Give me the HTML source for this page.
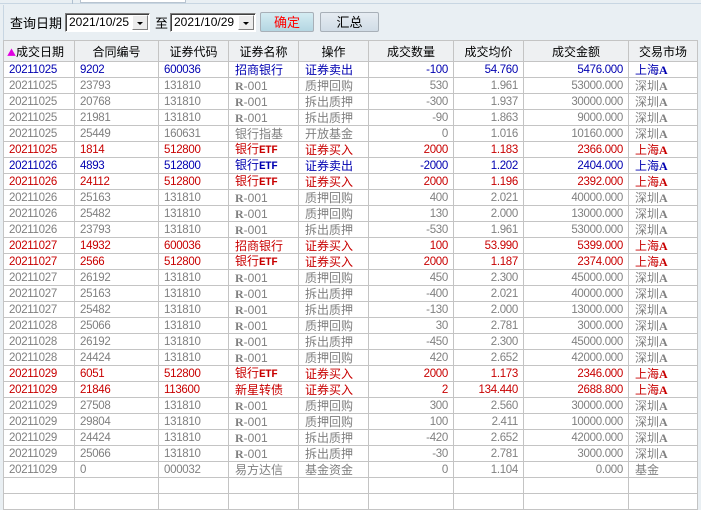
<!DOCTYPE html>
<html><head><meta charset="utf-8"><style>
*{margin:0;padding:0;box-sizing:border-box}
body{width:701px;height:496px;overflow:hidden;background:#e9eff3;position:relative;font-family:"Liberation Sans","Noto Sans CJK SC",sans-serif}
.abs{position:absolute}
.date{position:absolute;top:13px;height:19px;background:#fff;border:1px solid #808080;border-right-color:#fff;border-bottom-color:#fff;box-shadow:inset 1px 1px 0 #404040;font:12px "Liberation Sans",sans-serif;line-height:17px;padding-left:3px;color:#000}
.dd{position:absolute;right:1px;top:1px;width:16px;height:15px;background:#ececec;border:1px solid #fff;border-right-color:#808080;border-bottom-color:#808080}
.dd:after{content:"";position:absolute;left:4px;top:6px;border-left:3px solid transparent;border-right:3px solid transparent;border-top:3px solid #000}
.btn{position:absolute;top:12px;height:20px;border:1px solid #a8b0b8;border-radius:2px;font:13px "Noto Sans CJK SC",sans-serif;line-height:18px;text-align:center}
table{position:absolute;left:3px;top:40px;border-collapse:collapse;table-layout:fixed;background:#fff}
td,th{border:1px solid #c4c4c4;height:16px;padding:0 5px;white-space:nowrap;overflow:hidden;font:11.5px "Liberation Sans",sans-serif;line-height:14px;letter-spacing:-0.3px}
th{height:21px;background:#eef0f2;font:12px "Noto Sans CJK SC",sans-serif;font-weight:normal;color:#000;text-align:center;letter-spacing:0}
td.c{font:12px "Liberation Sans","Noto Sans CJK SC",sans-serif;line-height:14px;padding-left:6px;letter-spacing:0}
td.r{text-align:right}
tr.g td{color:#808080}
tr.b td{color:#0000b0}
tr.d td{color:#c80000}
b{font-family:"Liberation Serif",serif;font-weight:bold}
i{font-style:normal;font:bold 11px "Liberation Mono",monospace;letter-spacing:-0.5px}
</style></head><body>
<div class="abs" style="left:0;top:0;width:701px;height:4px;background:#e9eff3;border-bottom:1px solid #c8d6e2"></div>
<div class="abs" style="left:72px;top:0;width:1px;height:4px;background:#b0c0d0"></div>
<div class="abs" style="left:80px;top:0;width:106px;height:3px;background:#fff;border:1px solid #b8c4d0;border-top:none"></div>
<div class="abs" style="left:3px;top:5px;width:1px;height:36px;background:#c8d6e2"></div>
<div class="abs" style="left:10px;top:14px;font:13px 'Noto Sans CJK SC',sans-serif;line-height:18px">查询日期</div>
<div class="date" style="left:65px;width:85px">2021/10/25<div class="dd"></div></div>
<div class="abs" style="left:155px;top:14px;font:13px 'Noto Sans CJK SC',sans-serif;line-height:18px">至</div>
<div class="date" style="left:170px;width:86px">2021/10/29<div class="dd"></div></div>
<div class="btn" style="left:260px;width:54px;color:#f00;background:linear-gradient(#d4ecf2,#b4d6e2)">确定</div>
<div class="btn" style="left:320px;width:59px;color:#000;background:linear-gradient(#e6ecf2,#d0dce6)">汇总</div>
<table>
<colgroup><col style="width:71px"><col style="width:84px"><col style="width:70px"><col style="width:70px"><col style="width:70px"><col style="width:85px"><col style="width:70px"><col style="width:105px"><col style="width:69px"></colgroup>
<tr><th style="text-align:left;padding-left:3px"><span style="color:#e000e0;font-size:9px">▲</span>成交日期</th><th>合同编号</th><th>证券代码</th><th>证券名称</th><th>操作</th><th>成交数量</th><th>成交均价</th><th>成交金额</th><th>交易市场</th></tr>
<tr class="b"><td>20211025</td><td>9202</td><td>600036</td><td class="c">招商银行</td><td class="c">证券卖出</td><td class="r">-100</td><td class="r">54.760</td><td class="r">5476.000</td><td class="c">上海<b>A</b></td></tr>
<tr class="g"><td>20211025</td><td>23793</td><td>131810</td><td class="c"><b>R</b>-001</td><td class="c">质押回购</td><td class="r">530</td><td class="r">1.961</td><td class="r">53000.000</td><td class="c">深圳<b>A</b></td></tr>
<tr class="g"><td>20211025</td><td>20768</td><td>131810</td><td class="c"><b>R</b>-001</td><td class="c">拆出质押</td><td class="r">-300</td><td class="r">1.937</td><td class="r">30000.000</td><td class="c">深圳<b>A</b></td></tr>
<tr class="g"><td>20211025</td><td>21981</td><td>131810</td><td class="c"><b>R</b>-001</td><td class="c">拆出质押</td><td class="r">-90</td><td class="r">1.863</td><td class="r">9000.000</td><td class="c">深圳<b>A</b></td></tr>
<tr class="g"><td>20211025</td><td>25449</td><td>160631</td><td class="c">银行指基</td><td class="c">开放基金</td><td class="r">0</td><td class="r">1.016</td><td class="r">10160.000</td><td class="c">深圳<b>A</b></td></tr>
<tr class="d"><td>20211025</td><td>1814</td><td>512800</td><td class="c">银行<i>ETF</i></td><td class="c">证券买入</td><td class="r">2000</td><td class="r">1.183</td><td class="r">2366.000</td><td class="c">上海<b>A</b></td></tr>
<tr class="b"><td>20211026</td><td>4893</td><td>512800</td><td class="c">银行<i>ETF</i></td><td class="c">证券卖出</td><td class="r">-2000</td><td class="r">1.202</td><td class="r">2404.000</td><td class="c">上海<b>A</b></td></tr>
<tr class="d"><td>20211026</td><td>24112</td><td>512800</td><td class="c">银行<i>ETF</i></td><td class="c">证券买入</td><td class="r">2000</td><td class="r">1.196</td><td class="r">2392.000</td><td class="c">上海<b>A</b></td></tr>
<tr class="g"><td>20211026</td><td>25163</td><td>131810</td><td class="c"><b>R</b>-001</td><td class="c">质押回购</td><td class="r">400</td><td class="r">2.021</td><td class="r">40000.000</td><td class="c">深圳<b>A</b></td></tr>
<tr class="g"><td>20211026</td><td>25482</td><td>131810</td><td class="c"><b>R</b>-001</td><td class="c">质押回购</td><td class="r">130</td><td class="r">2.000</td><td class="r">13000.000</td><td class="c">深圳<b>A</b></td></tr>
<tr class="g"><td>20211026</td><td>23793</td><td>131810</td><td class="c"><b>R</b>-001</td><td class="c">拆出质押</td><td class="r">-530</td><td class="r">1.961</td><td class="r">53000.000</td><td class="c">深圳<b>A</b></td></tr>
<tr class="d"><td>20211027</td><td>14932</td><td>600036</td><td class="c">招商银行</td><td class="c">证券买入</td><td class="r">100</td><td class="r">53.990</td><td class="r">5399.000</td><td class="c">上海<b>A</b></td></tr>
<tr class="d"><td>20211027</td><td>2566</td><td>512800</td><td class="c">银行<i>ETF</i></td><td class="c">证券买入</td><td class="r">2000</td><td class="r">1.187</td><td class="r">2374.000</td><td class="c">上海<b>A</b></td></tr>
<tr class="g"><td>20211027</td><td>26192</td><td>131810</td><td class="c"><b>R</b>-001</td><td class="c">质押回购</td><td class="r">450</td><td class="r">2.300</td><td class="r">45000.000</td><td class="c">深圳<b>A</b></td></tr>
<tr class="g"><td>20211027</td><td>25163</td><td>131810</td><td class="c"><b>R</b>-001</td><td class="c">拆出质押</td><td class="r">-400</td><td class="r">2.021</td><td class="r">40000.000</td><td class="c">深圳<b>A</b></td></tr>
<tr class="g"><td>20211027</td><td>25482</td><td>131810</td><td class="c"><b>R</b>-001</td><td class="c">拆出质押</td><td class="r">-130</td><td class="r">2.000</td><td class="r">13000.000</td><td class="c">深圳<b>A</b></td></tr>
<tr class="g"><td>20211028</td><td>25066</td><td>131810</td><td class="c"><b>R</b>-001</td><td class="c">质押回购</td><td class="r">30</td><td class="r">2.781</td><td class="r">3000.000</td><td class="c">深圳<b>A</b></td></tr>
<tr class="g"><td>20211028</td><td>26192</td><td>131810</td><td class="c"><b>R</b>-001</td><td class="c">拆出质押</td><td class="r">-450</td><td class="r">2.300</td><td class="r">45000.000</td><td class="c">深圳<b>A</b></td></tr>
<tr class="g"><td>20211028</td><td>24424</td><td>131810</td><td class="c"><b>R</b>-001</td><td class="c">质押回购</td><td class="r">420</td><td class="r">2.652</td><td class="r">42000.000</td><td class="c">深圳<b>A</b></td></tr>
<tr class="d"><td>20211029</td><td>6051</td><td>512800</td><td class="c">银行<i>ETF</i></td><td class="c">证券买入</td><td class="r">2000</td><td class="r">1.173</td><td class="r">2346.000</td><td class="c">上海<b>A</b></td></tr>
<tr class="d"><td>20211029</td><td>21846</td><td>113600</td><td class="c">新星转债</td><td class="c">证券买入</td><td class="r">2</td><td class="r">134.440</td><td class="r">2688.800</td><td class="c">上海<b>A</b></td></tr>
<tr class="g"><td>20211029</td><td>27508</td><td>131810</td><td class="c"><b>R</b>-001</td><td class="c">质押回购</td><td class="r">300</td><td class="r">2.560</td><td class="r">30000.000</td><td class="c">深圳<b>A</b></td></tr>
<tr class="g"><td>20211029</td><td>29804</td><td>131810</td><td class="c"><b>R</b>-001</td><td class="c">质押回购</td><td class="r">100</td><td class="r">2.411</td><td class="r">10000.000</td><td class="c">深圳<b>A</b></td></tr>
<tr class="g"><td>20211029</td><td>24424</td><td>131810</td><td class="c"><b>R</b>-001</td><td class="c">拆出质押</td><td class="r">-420</td><td class="r">2.652</td><td class="r">42000.000</td><td class="c">深圳<b>A</b></td></tr>
<tr class="g"><td>20211029</td><td>25066</td><td>131810</td><td class="c"><b>R</b>-001</td><td class="c">拆出质押</td><td class="r">-30</td><td class="r">2.781</td><td class="r">3000.000</td><td class="c">深圳<b>A</b></td></tr>
<tr class="g"><td>20211029</td><td>0</td><td>000032</td><td class="c">易方达信</td><td class="c">基金资金</td><td class="r">0</td><td class="r">1.104</td><td class="r">0.000</td><td class="c">基金</td></tr>
<tr><td></td><td></td><td></td><td></td><td></td><td></td><td></td><td></td><td></td></tr>
<tr><td></td><td></td><td></td><td></td><td></td><td></td><td></td><td></td><td></td></tr>
</table>
</body></html>
